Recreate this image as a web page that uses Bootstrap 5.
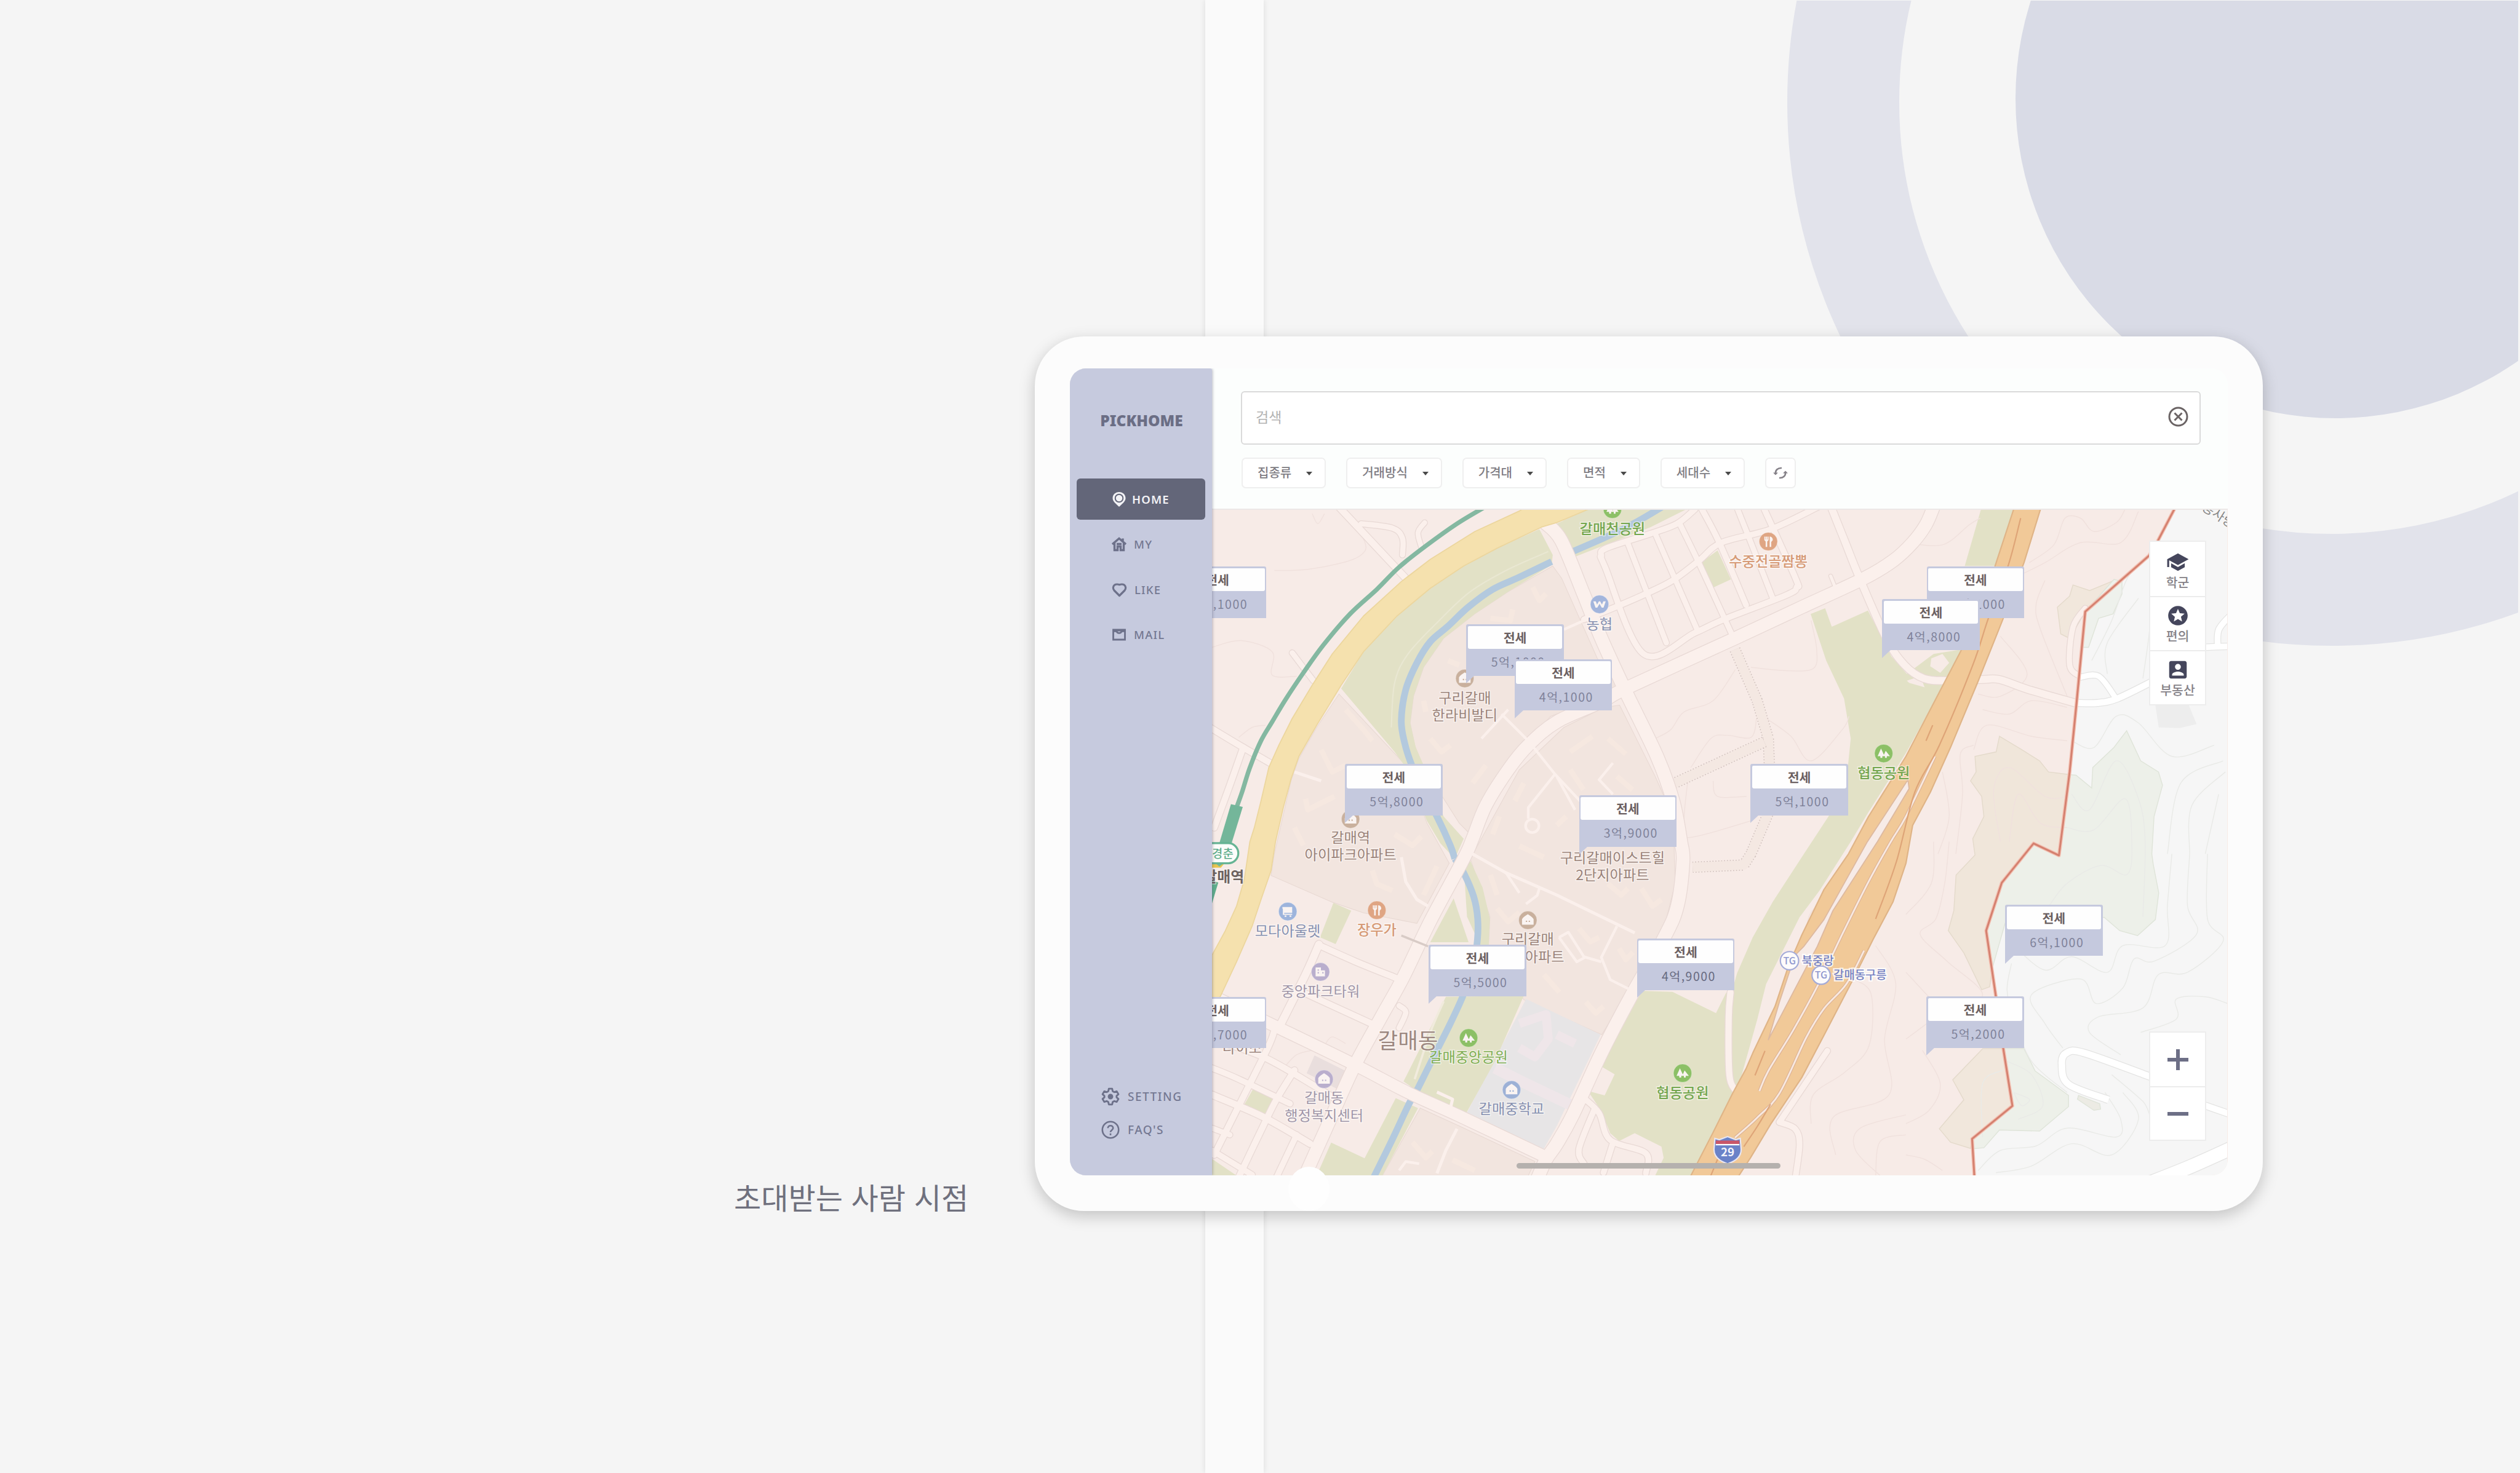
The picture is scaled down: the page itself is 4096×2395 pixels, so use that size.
<!DOCTYPE html>
<html lang="ko">
<head>
<meta charset="utf-8">
<title>PICKHOME</title>
<link href="https://cdn.jsdelivr.net/npm/bootstrap@5.3.0/dist/css/bootstrap.min.css" rel="stylesheet">
<style>
:root{--u:.36198px}
html,body{margin:0;background:#f5f5f5}
body{font-family:"Noto Sans CJK KR","Noto Sans",sans-serif;overflow:hidden;width:4096px;height:2395px}
.stage{width:4096px;padding:547px 0 0 1193px}
.rings{left:0;top:1px;width:4093px;height:2394px}
.pillar{left:1959px;top:0;width:95px;height:2395px;background:#fafafa;box-shadow:0 0 10px rgba(0,0,0,.1)}
.caption-text{width:489px;font-size:48px;line-height:48px;color:#6f707d;letter-spacing:.1px;white-space:nowrap}
.tablet{width:1996px;height:1422px;border-radius:80px;background:#fcfcfc;padding:52px 57px 58px;box-shadow:0 8px 26px rgba(0,0,0,.21)}
.screen{height:1312px;border-radius:26px;overflow:hidden;background:#fcfefd}
.side{width:231px;background:#c6cade;z-index:3;border-top-right-radius:4px;box-shadow:1px 0 4px rgba(60,60,90,.35);color:#747892;font-family:"Noto Sans",sans-serif}
.brand{height:179px;padding:68px 0 0 2px;font-weight:900;font-size:24.5px;line-height:34px;color:#6b6e85}
.side-nav{gap:6.5px;padding:0 11px}
.side-link{height:67px;padding:0 0 0 57px;gap:12px;border-radius:6px;font-size:18.5px;font-weight:500;letter-spacing:1.2px;color:#747892}
.side-link.active{background:#636679;color:#f3f3f6;font-weight:600;gap:9px}
.side-foot{padding:0 0 47px 51px;font-size:19px;font-weight:500;letter-spacing:1.5px}
.side-foot div{height:54px;gap:13px}
.topbar{height:230px;padding:37px 44px 0 47px;border-bottom:2px solid #ece8e7}
.search-box{height:87px;border:2px solid #dadada;border-radius:6px;background:#fff;padding:0 18px 4px 22px;font-size:23px;color:#b3b3b3}
.chips{gap:33px;margin-top:21px;padding-left:1px}
.chip{height:50px;border:2px solid #efefef;border-radius:7px;background:#fff;padding:0 20px 2px 24px;font-size:20px;font-weight:500;color:#807d84;gap:24px}
.chip i{width:0;height:0;border:5.5px solid transparent;border-top:6.5px solid #4a4a4a;border-bottom:0;margin-top:3px}
.chip-sq{width:50px;padding:0}
.map{height:1082px;background:#f7ebe7}
.map svg.canvas{left:0;top:-1px;width:1650.3px;height:1083.4px}
.pin{left:calc((var(--x) - 20)*var(--u));top:calc((var(--y) - 22.7)*var(--u));width:158.5px;height:83.5px;background:#c5c9de;border-radius:3px 3px 0 0;padding:3px 2.5px 0;text-align:center}
.pin b{height:37px;line-height:36px;background:#fefefe;border-radius:2px 2px 3px 3px;font-size:20.5px;font-weight:700;color:#6b6061}
.pin span{height:42px;line-height:41px;font-size:19.5px;color:#7f829a;letter-spacing:1.5px;padding-left:10px}
.pin::after{content:"";position:absolute;left:0;top:83px;border-top:13px solid #c5c9de;border-right:14px solid transparent}
.pin.strong span{color:#676a80}
.tools{right:37px;width:89px;background:#fff;box-shadow:0 0 0 2px #ededed}
.tools.cats{top:52px}.tools.zooms{bottom:58px}
.tool{height:88px;font-size:20.5px;font-weight:500;line-height:26px;color:#858288;padding-top:14px}
.tool+.tool{border-top:2px solid #ececec;padding-top:11px}
.zoom-cell{height:87px}.zoom-cell+.zoom-cell{border-top:2px solid #ececec}
.homebar{left:495px;bottom:11px;width:429px;height:9.5px;border-radius:5px;background:#b5b1ae}
.knob{left:2094px;top:1897px;width:67px;height:72px;border-radius:50%;background:#fefefe}
.halo{paint-order:stroke;stroke:#fff;stroke-opacity:.5;stroke-width:8}
</style>
<script src="https://cdn.jsdelivr.net/npm/bootstrap@5.3.0/dist/js/bootstrap.bundle.min.js"></script>
</head>
<body>
<svg class="rings position-absolute" viewBox="0 1 4093 2394"><circle cx="3789" cy="166" r="793" fill="none" stroke="#e2e3eb" stroke-width="182"/><circle cx="3796" cy="160" r="520" fill="#d9dbe6"/></svg>
<div class="pillar position-absolute"></div>
<main class="stage d-flex align-items-end position-relative">
  <div class="caption-text flex-shrink-0">초대받는 사람 시점</div>
  <div class="tablet flex-shrink-0">
    <div class="screen d-flex">
      <aside class="side d-flex flex-column flex-shrink-0 position-relative">
        <div class="brand text-center">PICKHOME</div>
        <nav class="side-nav nav flex-column">
          <a class="side-link active d-flex align-items-center text-decoration-none"><svg width="24" height="26" viewBox="0 0 24 26"><path d="M12 1C6 1 1.500 5.300 1.500 11c0 5.500 5.500 9 10.500 14 5-5 10.500-8.500 10.500-14C22.500 5.300 18 1 12 1z" fill="#f3f3f6"/><circle cx="12" cy="11" r="6.300" fill="none" stroke="#636679" stroke-width="2"/></svg>HOME</a>
          <a class="side-link d-flex align-items-center text-decoration-none"><svg width="24" height="24" viewBox="0 0 24 24" fill="none" stroke="#6d718a" stroke-width="3.400"><path d="M1 12L12 2.500 23 12M4.500 10v11.500h5V15.500h5v6h5V10M18 2.500v5M8 11.500h8"/></svg>MY</a>
          <a class="side-link d-flex align-items-center text-decoration-none"><svg width="25" height="24" viewBox="0 0 25 24" fill="none" stroke="#6d718a" stroke-width="3.200" stroke-linejoin="round"><path d="M12.500 21.500L4 13C1.500 10 2 6 4.500 4.200 7.500 2.300 10.500 3 12.500 3.700 14.500 3 17.500 2.300 20.500 4.200 23 6 23.500 10 21 13z"/></svg>LIKE</a>
          <a class="side-link d-flex align-items-center text-decoration-none"><svg width="24" height="22" viewBox="0 0 24 22" fill="none" stroke="#6d718a" stroke-width="2.800"><path d="M2.500 3h19v16h-19zM2.500 4h19M3 5l5 .500c1 3.800 7 3.800 8 0L21 5"/></svg>MAIL</a>
        </nav>
        <div class="side-foot mt-auto">
          <div class="d-flex align-items-center"><svg width="30" height="32" viewBox="1 1 22 22" fill="none" stroke="#6d718a" stroke-width="2.100" stroke-linejoin="round"><path d="M10 2.600h4l.6 2.900 2 1.150 2.850-.95 2 3.450-2.200 2v1.700l2.200 2-2 3.450-2.850-.95-2 1.150-.6 2.900h-4l-.6-2.900-2-1.150-2.850.95-2-3.450 2.200-2v-1.700l-2.200-2 2-3.450 2.850.95 2-1.150z"/><circle cx="12" cy="12" r="2.200" fill="#6d718a"/></svg>SETTING</div>
          <div class="d-flex align-items-center"><svg width="30" height="30" viewBox="0 0 30 30" fill="none" stroke="#6d718a" stroke-width="2.600"><circle cx="15" cy="15" r="13.200"/><path d="M10.800 12.300c0-5.400 8.400-5.400 8.400 0 0 3-4.200 3.300-4.200 6.500"/><path d="M15 20.800v3"/></svg>FAQ'S</div>
        </div>
      </aside>
      <section class="flex-grow-1 d-flex flex-column position-relative">
        <header class="topbar flex-shrink-0">
          <div class="search-box d-flex align-items-center justify-content-between"><span>검색</span>
            <svg width="33" height="33" viewBox="0 0 33 33" fill="none" stroke="#6b6465" stroke-width="3"><circle cx="16.500" cy="16.500" r="14.500"/><path d="M10.500 10.500l12 12M22.500 10.500l-12 12"/></svg></div>
          <div class="chips d-flex">
            <div class="chip d-flex align-items-center">집종류<i></i></div>
            <div class="chip d-flex align-items-center">거래방식<i></i></div>
            <div class="chip d-flex align-items-center">가격대<i></i></div>
            <div class="chip d-flex align-items-center">면적<i></i></div>
            <div class="chip d-flex align-items-center">세대수<i></i></div>
            <div class="chip chip-sq d-flex align-items-center justify-content-center"><svg width="26" height="24" viewBox="0 0 26 24" fill="none" stroke="#858188" stroke-width="2.600"><path d="M5 14C4 7 9 3.500 15 4M21 10c1 7-4 10.500-10 10"/><path d="M1 11.500l4 4 4-4zM17 12.500l4-4 4 4z" fill="#858188" stroke="none"/></svg></div>
          </div>
        </header>
        <div class="map position-relative overflow-hidden flex-shrink-0">
          <svg class="canvas position-absolute" viewBox="20 20 4559 2993" id="map">
            <g id="base"></g><g id="casing"></g><g id="road"></g><g id="over"></g>
            <g id="poi" font-family="'Noto Sans CJK KR',sans-serif" text-anchor="middle"></g>
          </svg>
          <div id="pins"></div>
          <div class="tools cats position-absolute">
            <div class="tool d-flex flex-column align-items-center"><svg width="38" height="38" viewBox="0 0 24 24" fill="#45465c"><path transform="matrix(-1 0 0 1 24 0)" d="M5 13.180v4L12 21l7-3.820v-4L12 17l-7-3.820zM12 3L1 9l11 6 9-4.910V17h2V9L12 3z"/></svg>학군</div>
            <div class="tool d-flex flex-column align-items-center"><svg width="38" height="38" viewBox="0 0 24 24" fill="#45465c"><path d="M11.990 2C6.470 2 2 6.480 2 12s4.470 10 9.990 10C17.520 22 22 17.520 22 12S17.520 2 11.990 2zm4.240 16L12 15.450 7.770 18l1.120-4.810-3.730-3.230 4.920-.42L12 5l1.920 4.530 4.920.42-3.730 3.230L16.230 18z"/></svg>편의</div>
            <div class="tool d-flex flex-column align-items-center"><svg width="38" height="38" viewBox="0 0 24 24" fill="#45465c"><path d="M3 5v14c0 1.100.89 2 2 2h14c1.100 0 2-.9 2-2V5c0-1.100-.9-2-2-2H5c-1.110 0-2 .9-2 2zm12 4c0 1.660-1.340 3-3 3s-3-1.340-3-3 1.340-3 3-3 3 1.340 3 3zm-9 8c0-2 4-3.100 6-3.100s6 1.100 6 3.100v1H6v-1z"/></svg>부동산</div>
          </div>
          <div class="tools zooms position-absolute">
            <div class="zoom-cell d-flex align-items-center justify-content-center"><svg width="34" height="34" stroke="#6d6f86" stroke-width="6"><path d="M0 17h34M17 0v34"/></svg></div>
            <div class="zoom-cell d-flex align-items-center justify-content-center"><svg width="34" height="34" stroke="#6d6f86" stroke-width="6"><path d="M0 17h34"/></svg></div>
          </div>
          <div class="homebar position-absolute"></div>
        </div>
      </section>
    </div>
  </div>
  <div class="knob position-absolute"></div>
</main>
<script>
const NS='http://www.w3.org/2000/svg';
const $=id=>document.getElementById(id);
function el(parent,tag,attrs,text){const e=document.createElementNS(NS,tag);for(const k in attrs)e.setAttribute(k,attrs[k]);if(text)e.textContent=text;$(parent).appendChild(e);return e}
const pts=s=>s.trim().split(/\s+/).map(p=>p.split(',').map(Number));
// Catmull-Rom spline through the points
function curve(s){const p=pts(s);let d='M'+p[0];for(let i=0;i<p.length-1;i++){const a=p[i-1]||p[i],b=p[i],c=p[i+1],e=p[i+2]||c;
 d+=`C${b[0]+(c[0]-a[0])/6},${b[1]+(c[1]-a[1])/6} ${c[0]-(e[0]-b[0])/6},${c[1]-(e[1]-b[1])/6} ${c}`}return d}
const area=(s,fill,extra)=>el('base','polygon',{points:s,fill,...extra});
const line=(g,s,stroke,w,extra)=>el(g,'path',{d:curve(s),fill:'none',stroke,'stroke-width':w,'stroke-linejoin':'round',...extra});
const poly=(g,s,stroke,w,extra)=>el(g,'polyline',{points:s,fill:'none',stroke,'stroke-width':w,'stroke-linejoin':'round',...extra});

// land east of the city boundary
const border='4341,20 4268,160 4228,228 3941,480 3901,900 3871,1200 3823,1575 3709,1521 3566,1698 3496,1913 3539,2203 3573,2443 3614,2700 3433,2848 3443,3013';
area(border+' 4600,3013 4600,20','#f6f6f6');
// housing blocks
const res='#f2e5df';
area('590,850 490,1000 410,1140 375,1240 300,1568 285,1665 560,1785 700,1833 940,1880 1085,1610 985,1430 890,1170',res,{stroke:'#e8d9d3','stroke-width':3});
area('1550,275 1590,330 1750,690 1860,830 1540,950 1340,1170 1180,1480 1130,1430 965,1170 930,1080 910,980 925,860 970,730 1060,600 1200,490 1350,390',res,{stroke:'#e8d9d3','stroke-width':3});
area('1850,900 2010,1220 2090,1400 2100,1700 2040,1940 1770,2380 1568,2290 1420,2223 1262,1980 1268,1850 1180,1590 1400,1190 1600,1000 1780,910',res,{stroke:'#e8d9d3','stroke-width':3});
area('955,2710 1130,2790 1470,2950 1440,3013 785,3013',res,{stroke:'#e8d9d3','stroke-width':3});
area('1430,2220 1765,2380 1568,2790 1500,2910 1165,2730','#e7e5e6');
area('480,2473 620,2543 580,2623 445,2553','#e9dedd');
poly('base','1400,2330 1520,2290 1530,2400 1470,2480 1400,2440','#efe6e9',40);poly('base','1290,2530 1430,2600 1640,2700','#efe6e9',50);poly('base','1568,2380 1650,2420','#efe6e9',40);
// parks
const g='#e2e1c6';
['600,825 700,660 850,500 1000,375 1150,275 1300,195 1490,110 1550,225 1545,270 1350,390 1200,490 1060,600 970,730 925,860 910,980 935,1090 970,1170 1060,1400 1150,1500 1110,1590 1045,1520 985,1420 880,1165 840,1110',
'1568,85 1710,20 2150,20 1990,100 1620,245 1550,100','880,2590 1070,2210 1420,2205 1290,2500 1160,2735 950,2640',
'845,2665 945,2710 785,3013 490,3013 555,2865 705,2935','565,1788 645,1823 575,1973 505,1943','205,2623 300,2658 250,2748 160,2703',
'1105,1768 1172,1965 1000,1965','1150,1620 1180,1600 1235,1720 1268,1860 1262,1980 1225,1980 1165,1850','20,2938 130,3013 20,3013',
'2208,265 2290,205 2350,335 2270,372','3473,20 3620,20 3536,275 3400,275',
'2708,490 2773,465 2803,548 2965,475 3025,590 3070,680 3140,760 3260,670 3386,650 3266,880 3136,1115 2968,1380 2888,1513 2748,1733 2658,1853 2508,2153 2468,2313 2398,2563 2370,2620 2358,2643 2268,2823 2168,3013 2010,3013 2048,2933 2038,2883 1918,2823 1848,2858 1808,2823 1768,2723 1708,2633 1783,2653 1828,2558 1768,2523 1913,2253 1948,2183 2088,2188 2283,2283 2328,2193 2358,2173 2378,2103 2448,1943 2538,1783 2678,1568 2788,1400 2868,1250 2888,1050 2858,870 2778,700'
].forEach(s=>area(s,g));
area('3250,690 3300,670 3330,710 3290,755 3245,725','#f7ebe7');area('3140,790 3200,770 3220,820 3150,800','#f7ebe7');
// hills
const hb={stroke:'#e4dacb','stroke-width':4},hg={stroke:'#dfe4d9','stroke-width':4};
area('3886,360 3961,385 4070,340 3941,480 3871,600 3831,580 3816,460 3871,410','#f1e7dc',hb);
area('4070,335 4106,345 4106,400 4066,490 4001,510 3956,640 3926,640 3941,480','#eef1ec',hg);
area('3556,1040 3656,1100 3736,1150 3776,1200 3871,1212 3823,1575 3709,1521 3566,1698 3496,1913 3522,2090 3512,2165 3476,2178 3396,2013 3326,1913 3351,1823 3361,1663 3446,1573 3436,1500 3486,1400 3476,1310 3426,1240 3451,1200 3446,1130 3541,1110','#f0e6da',hb);
area('3871,1212 3900,1215 3970,1272 3975,1180 4070,1090 4127,1015 4190,1150 4270,1200 4288,1260 4250,1400 4240,1568 4246,1613 4271,1743 4256,1863 4176,1935 4096,1913 4026,1853 3581,1880 3526,2073 3496,1913 3566,1698 3709,1521 3823,1575','#edf0e9',hg);
area('3481,2443 3346,2583 3396,2673 3286,2803 3336,2863 3426,2891 3433,2848 3614,2700 3573,2443','#f1e7dc',hb);
area('3573,2443 3666,2443 3716,2543 3866,2653 3866,2703 3736,2813 3556,2808 3486,2888 3433,2893 3433,2848 3614,2700','#edf0e9',hg);
area('3911,2653 4006,2690 4010,2715 3980,2720 3906,2670','#ecebe4',hg);
area('4256,900 4406,900 4441,985 4366,1003 4271,1000','#ededed');
// contour lines
['300,295 450,290 640,250 710,200 690,130','20,640 150,610 290,660 290,765 400,770','140,1045 200,1000 260,990','470,40 495,85 525,40',
'2010,1050 2080,1010 2140,930 2270,880 2370,740','2440,730 2600,745 2720,735 2735,650 2710,520','2170,1180 2260,1050 2330,1035 2440,1045 2465,960','2510,960 2620,1040 2710,1150 2850,1010 2880,950','2160,1210 2140,1400 2150,1495 2440,1420','2270,1240 2290,1310 2420,1310',
'3136,170 3300,180 3420,90 3470,60','3690,260 3800,180 3850,60 3920,60 3980,120 4080,80 4120,20','3640,320 3760,260 3920,170 4100,170 4180,30','3760,340 3720,450 3740,560 3860,860','3560,590 3680,760 3560,860 3460,850','3480,920 3600,940 3700,880 3860,910','3440,1100 3500,990 3700,1040 3860,1060','3360,1568 3390,1300 3380,1120 3440,1080','3280,1568 3330,1400 3300,1200','3560,1513 3530,1280 3600,1180 3760,1310 3860,1310','3600,1513 3640,1300 3740,1430 3860,1450','3136,1840 3250,1700 3260,1513','3136,2100 3330,2280 3480,2200 3320,2050 3200,1930 3270,1860 3310,1700 3330,1513','3136,2400 3230,2330','3210,2450 3290,2600 3240,2720 3136,2780','3136,2920 3220,2940 3300,2990','2700,2020 2700,1850 2800,1750','2710,2780 2720,2650 2860,2550 2970,2430 2980,2200 2900,2130','2820,2920 2810,2750 3060,2650 3040,2400 3090,2150 3000,1980','3020,3013 2910,2900 2930,2800 3136,2740','3000,3013 3020,2860 3136,2830','620,2420 560,2390 530,2420','350,2520 400,2470 470,2450'
].forEach(s=>line('base',s,'#f0e1dd',4));
['3970,700 4060,520 4130,330 4200,260','4040,760 4040,620 4180,420','4200,780 4230,560 4230,420','3880,1060 3980,1090 4080,950 4180,980 4330,1130 4520,1080','3880,1300 3960,1370 4080,1150 4180,1320 4210,1513 4200,1850','3860,1450 3980,1460 4120,1320 4150,1513 4130,1660 4010,1620 3860,1700 3780,1800','4310,1568 4370,1250 4560,1150','4410,1568 4420,1350 4570,1200','4480,1568 4540,1300','3620,1980 3760,2090 3880,2030 4040,2100 4110,1980 4300,1980 4310,1800 4330,1568','4410,1568 4400,1800 4440,1930 4250,2050 4160,2040 4110,2170 3990,2240 3920,2130 3700,2200 3760,2330 3840,2440','4490,1568 4490,1860 4560,1960 4400,2100 4270,2110 4200,2260 4000,2300 3960,2370 4100,2470','4580,2240 4480,2210 4350,2220 4350,2310 4190,2370','3610,2060 3590,2180 3620,2300 3700,2500 3860,2640','4060,2560 4200,2680 4260,2760 4420,2620','3460,2990 3560,2900 3720,2880 3860,2800 4080,2840 4100,2760 4030,2640','3540,3000 3700,2970 3880,2870 4060,2920 4180,2760 4110,2640','3480,2840 3480,2600 3570,2540','3620,2640 3690,2670 3660,2700 3640,2680 3620,2640','3590,2500 3700,2560 3750,2700 3640,2760'
].forEach(s=>line('base',s,'#e9eae7',4));
// creek
['2040,10 1930,75 1800,140 1612,222','1545,255 1400,325 1280,380 1170,460 1080,545 1000,615 940,710 890,830 870,970 885,1070 915,1165 970,1290 1030,1400 1090,1530 1110,1590','1110,1590 1150,1653 1195,1760 1213,1860 1210,1970 1185,2100 1145,2210 1090,2330 1030,2450 985,2540 940,2630 905,2690 830,2850 745,3023'].forEach(s=>line('base',s,'#b3c9de',30));
line('base','1530,210 1350,290 1180,390 1040,520 900,670 840,800 825,1000','#e9e7d2',6);line('base','1060,2230 1000,2370 930,2580','#f1ebdd',10);
// dotted lanes under construction
['2368,650 2468,880 2518,1050 2523,1180 2520,1380 2440,1568 2408,1618 2178,1628','2500,1065 2098,1250'].forEach(s=>{poly('base',s,'#cfc0bc',50,{'stroke-dasharray':'5 8'});poly('base',s,'#f4e8e2',42)});
// buildings
['620,920 700,1010 740,1060','510,1100 560,1200 620,1170','440,1320 450,1370 570,1310','390,1450 430,1530','1000,1050 1050,1110 1090,1080','1250,1170 1190,1250','1460,370 1490,430 1520,400','1370,470 1360,520 1270,510','840,1480 920,1530 960,1490','1080,700 1130,720','970,880 980,930','1628,1110 1728,1040','1798,1050 1878,1120','1628,1190 1688,1280','1838,1220 1908,1280','740,1643 760,1703 830,1733','1030,1623 970,1753','1270,1663 1300,1753','1400,1533 1510,1583','1300,1813 1350,1873 1400,1830','920,2863 980,2933 1010,2903','1100,2943 1200,2990','1798,1703 1858,1753 1888,1723','1948,1723 1998,1803 2038,1773','1668,1903 1718,1963 1758,1943','1848,1993 1878,2043 1910,2010','1698,2233 1743,2283 1778,2253','1510,2110 1580,2190','1568,1440 1610,1400','1380,1330 1420,1250','1280,1480 1310,1400'].forEach(s=>poly('base',s,'#f6e8e0',24));

// streets: width, points
const streets=[
[58,'1515,80 1588,160 1688,400 1768,600 1878,840 2018,1130 2090,1330 2125,1513 2135,1600 2110,1800 2050,1945 1900,2210 1768,2463 1640,2740 1568,2870 1520,2940 1480,3030'],
[56,'3260,10 3225,90 3166,170 3080,250 2948,330 2668,460 2368,600 1888,820 1768,885 1568,975 1440,1080 1350,1190 1250,1350 1190,1500 1150,1590 1000,1870 880,2120 780,2300 660,2520 560,2740 430,3030'],
[52,'10,2200 320,2350 650,2510 900,2640 1130,2745 1520,2930'],
[28,'500,1978 660,2050 845,2125'],[34,'500,1975 440,2110 325,2340'],[28,'430,2190 745,2335'],
[28,'20,2400 250,2480 480,2610 560,2660'],[26,'20,2530 140,2580 370,2690'],[30,'20,2650 250,2750 460,2870'],[24,'20,2800 100,2830'],[26,'20,2900 200,3010'],
[28,'300,2360 270,2440 130,2720 30,2920'],[28,'390,2540 310,2670 250,2790 140,3020'],[26,'400,2830 310,3020'],
[30,'590,10 890,330'],[24,'690,85 830,105 875,150 875,225'],[22,'975,80 945,125 960,190'],[24,'380,665 475,790'],[28,'10,1000 160,1090 290,1165'],[28,'160,1090 100,1260 30,1450'],
[26,'2188,20 2108,85 1988,130 1790,195 1768,230 1785,280 1958,670 2188,575 2318,515 2600,405 2645,370 2640,330 2500,20'],
[24,'1888,175 2060,620'],[24,'2008,125 2198,560'],[24,'2120,85 2208,265 2358,590'],[26,'2220,20 2298,170 2418,450'],[24,'2380,20 2428,140 2538,420'],
[26,'1690,515 1818,465 1968,400 2088,340 2208,250 2308,170 2528,110 2740,10'],
[32,'2800,10 2860,160 2928,330 3048,600 3130,720 3216,780 3320,790 3476,785 3556,785 3686,830 3896,890'],[14,'2798,320 2818,370'],
[28,'2348,2190 2340,2300 2343,2560 2370,2630'],[26,'2783,2453 2568,2773'],[26,'2568,2773 2638,2803 2658,2873 2640,3020'],
[26,'1690,2665 1758,2733 1808,2853 1968,2913 1968,3003'],[26,'1738,2713 1668,2893 1690,2960'],[26,'1818,2873 1778,3000'],
[24,'3941,465 3886,550 3871,720 3916,770'],[24,'860,2250 890,2280 860,2350']];
streets.forEach(([w,s])=>{line('casing',s,'#e8d9d5',w+7,{'stroke-linecap':'round'});line('road',s,'#fbf0ec',w,{'stroke-linecap':'round'})});
[[14,'1180,1563 1340,1653 1568,1753 1918,1923'],[12,'1340,1653 1400,1743'],[12,'1490,1723 1480,1755 1430,1793'],[14,'870,1583 890,1693 940,1773 990,1803'],[12,'1838,1893 1768,2033 1808,2133 1888,2173'],[12,'1578,1943 1620,1920 1690,2030 1768,2053'],[12,'1578,1943 1658,2053 1700,2030'],[14,'1120,2803 1070,2900 1030,3003'],[14,'1030,2638 1100,2670 1090,2713'],[12,'1320,940 1440,1060 1560,1210 1700,1360'],[12,'1350,920 1230,1050'],[12,'1560,1210 1440,1360 1440,1410'],[14,'390,1200 510,1240'],[12,'1568,1220 1650,1370'],[12,'1820,1160 1758,1235 1820,1300'],[12,'1600,560 1690,520'],[12,'860,2990 890,2950 950,2960']].forEach(([w,s])=>poly('road',s,'#fbf0ec',w));
el('road','circle',{cx:1458,cy:1442,r:30,fill:'none',stroke:'#fbf0ec','stroke-width':12});
line('road','870,1935 990,1983','#d8cbc6',10);
[[24,'3916,775 4001,770 4076,865'],[28,'3901,890 3996,890 4086,870 4240,795'],[26,'4470,640 4600,635'],[26,'4600,490 4541,560 4536,640'],[30,'4236,2570 3936,2462 3856,2463 3836,2513 3866,2603 4046,2673'],[28,'4470,2695 4600,2740'],[60,'4220,3050 4420,2970 4620,2880']].forEach(([w,s])=>{line('casing',s,'#e4e4e3',w+7);line('road',s,'#fff',w)});
// trunk road
el('over','polygon',{points:'1400,28 1200,120 1000,245 870,345 700,500 560,670 470,810 380,960 320,1080 275,1180 240,1330 210,1450 190,1513 165,1683 130,1803 80,1913 20,2023 20,2280 60,2203 130,2053 200,1893 240,1773 285,1643 305,1513 340,1360 375,1230 410,1130 490,990 600,810 700,660 850,500 1000,375 1150,275 1300,195 1500,100 1568,80 1710,20 1420,15',fill:'#f5e1ae',stroke:'#ecd69e','stroke-width':5,'stroke-linejoin':'round'});
// expressway
el('over','polygon',{points:'3623,10 3536,275 3450,480 3386,650 3266,880 3136,1130 3068,1240 2968,1400 2878,1568 2768,1728 2668,1933 2608,2073 2548,2253 2448,2463 2418,2533 2358,2643 2268,2823 2160,3033 2373,3033 2438,2933 2528,2783 2668,2573 2768,2383 2898,2133 2988,1953 3078,1783 3136,1610 3166,1440 3246,1290 3336,1090 3461,790 3571,515 3666,260 3743,10',fill:'#f1c998',stroke:'#dfb487','stroke-width':6,'stroke-linejoin':'round'});
el('over','polygon',{points:'3145,1235 2963,1513 2768,1863 2678,1983 2638,2023 2568,2233 2518,2403 2628,2193 2738,1983 2808,1823 3008,1513 3150,1275',fill:'#f7ebe7',stroke:'#ddb9a0','stroke-width':5,'stroke-linejoin':'round'});
['3266,1130 3136,1400 3068,1513 2968,1693 2848,1933 2738,2163 2628,2363 2518,2543 2478,2633','2948,2003 2868,2153 2768,2263 2688,2393 2568,2643 2468,2753 2368,2843'].forEach(s=>{line('over',s,'#dcb194',14);line('over',s,'#f8e9e0',8)});
['3651,60 3596,270 3506,510 3436,720 3286,1080 3176,1290 3093,1603 3000,1860','3256,990 3226,1060','2503,2453 2458,2563','2528,2693 2468,2793 2408,2883','2290,2940 2260,3013'].forEach(s=>line('over',s,'#dea477',6));
// railway
line('over','1245,10 1120,85 980,185 860,280 760,380 640,490 520,630 430,755 350,875 290,975 240,1060 190,1180 155,1290 130,1360','#84b8a1',20);
el('over','polygon',{points:'105,1345 158,1357 105,1530 50,1530',fill:'#74b69a'});
el('over','polygon',{points:'0,1680 48,1697 20,1790 0,1800',fill:'#5fae8d'});
el('over','path',{d:'M20 1605h60l-20 25H20z',fill:'#e9c64f'});
el('over','path',{d:'M30 1605h48l-25 20z',fill:'#74b69a'});
el('over','rect',{x:-60,y:1520,width:198,height:90,rx:45,fill:'#fdfdfb',stroke:'#66b494','stroke-width':9});
// city boundary
poly('over',border,'#f3c0b2',16);poly('over',border,'#d4806f',8);

// points of interest: colour, disc, icon kind, centre x, icon y, then label rows
const glyph={
 tree:'M-15 20v-8h-12L-12-22 1 6l8-18 19 24H14v8H6v-8h-12v8z',
 fork:'M-18-22v16l6 6v24h7V0l6-6v-16h-5v13h-2v-13h-5v13h-2v-13zM6-22c10 0 14 7 14 16l-7 8v22H6z',
 won:'M-28-13l10 28h8l10-17 10 17h8l10-28H17l-6 14-8-14h-6l-8 14-6-14z',
 cart:'M-24-20h44v26h-36v4h36v5h-42v-28h-2zM-14 18h8v6h-8zM8 18h8v6H8z',
 tower:'M-22 20v-40H2v13h18v27zM-13-11v6h6v-6zM-13 1v6h6V1zM8 1v6h6V1z',
 house:'M-26 20V-5C-20-16-10-20 0-27 10-20 20-16 26-5v25zM-9 2v6h6V2zM4 2v6h6V2z'};
const G='#74a64f',B='#9a8279',O='#d69a76',P='#9f95a8',L='#8690b0',br='#c9b09d';
[[G,'#8cc066','tree',1818,20,'갈매천공원',108],[O,'#dfa583','fork',2518,165,'수중전골짬뽕',255],[L,'#a3b5dc','won',1760,447,'농협',535],
[B,br,'house',1155,780,'구리갈매',867,'한라비발디',945],[B,br,'house',642,1412,'갈매역',1495,'아이파크아파트',1573],
[B,'','',1818,0,'구리갈매이스트힐',1585,'2단지아파트',1663],[G,'#8cc066','tree',3036,1117,'협동공원',1203],[L,'#9db4dc','cart',360,1827,'모다아울렛',1913],
[O,'#dfa583','fork',760,1821,'장우가',1908],[P,'#b9aecd','tower',507,2098,'중앙파크타워',2185],['#7fae52','#8cc066','tree',1172,2395,'갈매중앙공원',2481],
[L,'#9db1d6','house',1365,2628,'갈매중학교',2713],[P,'#b9aecd','house',523,2580,'갈매동',2663,'행정복지센터',2743],[B,br,'house',1438,1866,'구리갈매',1950],
[B,'','',155,0,'다이소',2440],[G,'#8cc066','tree',2133,2553,'협동공원',2640]].forEach(([c,f,k,x,y,...rows])=>{
 if(f){el('poi','circle',{cx:x,cy:y,r:41,fill:f,stroke:'#fff','stroke-width':2,'stroke-opacity':.5});
  el('poi','path',{d:glyph[k],fill:'#faf4f2','fill-rule':'evenodd',transform:`translate(${x} ${y})`})}
 for(let i=0;i<rows.length;i+=2)el('poi','text',{x,y:rows[i+1]+23,'font-size':64,fill:c,class:'halo','font-weight':c===G||c===O?500:400},rows[i])});
el('poi','text',{x:1602,y:2054,'font-size':64,fill:B,'text-anchor':'end',class:'halo'},'2단지아파트');
el('poi','text',{x:900,y:2442,'font-size':98,fill:'#9c8780',class:'halo'},'갈매동');
el('poi','text',{x:164,y:1693,'font-size':66,'font-weight':700,fill:'#6d6260','text-anchor':'end',class:'halo'},'갈매역');
el('poi','text',{x:68,y:1587,'font-size':52,fill:'#5fae8d','font-weight':500},'경춘');
[[2613,2048,'북중랑',2740],[2755,2113,'갈매동구릉',2930]].forEach(([x,y,t,tx])=>{
 el('poi','circle',{cx:x,cy:y,r:41,fill:'#fdfbfb',stroke:'#a4abd8','stroke-width':6});
 el('poi','text',{x,y:y+16,'font-size':44,'font-weight':500,fill:'#8f98cf'},'TG');
 el('poi','text',{x:tx,y:y+18,'font-size':52,'font-weight':500,fill:'#7681c2',stroke:'#fff','stroke-width':12,'paint-order':'stroke','stroke-opacity':.8},t)});
el('poi','path',{d:'M2278 2846l20 6 37-14 37 14 20-6 4 50c0 34-24 52-61 64-37-12-61-30-61-64z',fill:'#6a82c8',stroke:'#e8e6f2','stroke-width':6});
el('poi','path',{d:'M2282 2856h106v18h-106z',fill:'#c9566a'});el('poi','path',{d:'M2282 2871h106v6h-106z',fill:'#fff'});
el('poi','text',{x:2335,y:2926,'font-size':52,'font-weight':700,fill:'#f4f4fb'},'29');
el('poi','text',{x:4540,y:67,'font-size':58,fill:'#858585',transform:'rotate(32 4540 47)'},'용사랑');

// price pins
[[-174,277,'5억,1000'],[1162,537,'5억,1000'],[1378,693,'4억,1000'],[617,1165,'5억,8000'],[1668,1305,'3억,9000'],[2438,1165,'5억,1000'],[3229,277,'5억,1000'],[3029,422,'4억,8000'],[993,1976,'5억,5000'],[-174,2210,'5억,7000'],[1928,1949,'4억,9000',1],[3581,1795,'6억,1000'],[3228,2208,'5억,2000']]
.forEach(([x,y,p,s])=>{$('pins').insertAdjacentHTML('beforeend',`<div class="pin position-absolute${s?' strong':''}" style="--x:${x};--y:${y}"><b class="d-block">전세</b><span class="d-block">${p}</span></div>`)});
</script>
</body>
</html>
